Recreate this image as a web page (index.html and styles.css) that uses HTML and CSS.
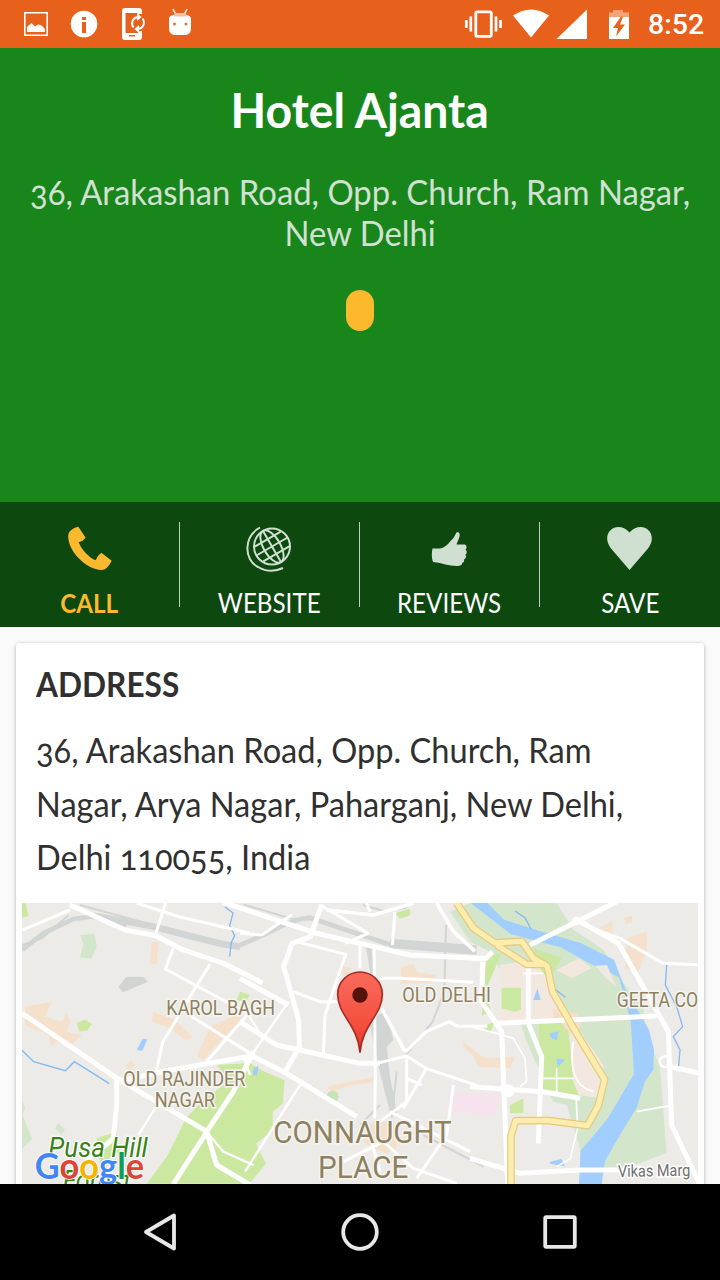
FILE: index.html
```html
<!DOCTYPE html>
<html lang="en">
<head>
<meta charset="utf-8">
<title>Hotel Ajanta</title>
<link rel="stylesheet" href="styles.css">
</head>
<body>
<div class="screen">
  <header class="status">
    <svg class="status-icons" width="200" height="48" viewBox="0 0 200 48">
      <g fill="#fff">
        <path fill-rule="evenodd" d="M24 12h24v24H24zM25.6 13.6v20.8h20.8V13.6z"/>
        <path d="M27 32v-5l4.500-4 3.500 3.500 3-2 3 .5 4 4v3z"/>
        <circle cx="84" cy="24" r="13.300"/>
        <path d="M125 8h14q3 0 3 3v3h-4v-1h-12.500v20H138v-2l4-1v7q0 3-3 3h-14q-3 0-3-3V11q0-3 3-3z"/>
        <path d="M169 18q1-3 6-3h10q6 0 6 4v9q0 7-6 7h-10q-6 0-6-7z"/>
      </g>
      <path d="M82 17h4v3h-4zM82 22h4v11h-4zM129 35h6v1.500h-6z" fill="#e8611c"/>
      <path d="M132.500 26a6 6 0 0 1 5.500-9M144 20a6.500 6.500 0 0 1-5 9" fill="none" stroke="#e8611c" stroke-width="5"/>
      <path d="M133.500 27.500a6.500 6.500 0 0 1 4.500-10.500M142.500 18.500a6.500 6.500 0 0 1-4.500 10.500" fill="none" stroke="#fff" stroke-width="2"/>
      <path d="M137 13l4.500 4-4.500 4zM139 25v8l-4.500-4z" fill="#fff"/>
      <path d="M173 9l2.500 5M187 9l-2.500 5" stroke="#fff" stroke-width="1.500"/>
      <path d="M175 13h11l1 3.500h-13z" fill="#f7bd9e"/>
      <circle cx="174.500" cy="24" r="1.500" fill="#c77d52"/><circle cx="186" cy="24" r="1.500" fill="#c77d52"/>
    </svg>
    <div class="status-right">
      <svg width="170" height="48" viewBox="460 0 170 48">
        <rect x="475.800" y="11.800" width="15.500" height="24.500" rx="1.500" fill="none" stroke="#fff" stroke-width="2.800"/>
        <path d="M466.300 20v8M470.800 16.500v15M496 16.500v15M500.500 20v8" stroke="#fff" stroke-width="2.700"/>
        <path d="M513 15.500Q531 3.500 549 15.500L531 37.500zM587 9.500V39h-30.500z" fill="#fff"/>
        <path d="M609 16h20v23h-20z" fill="#fff"/><path d="M609 12.500h4V10h10v2.500h6V17h-20z" fill="#f3a37b"/>
        <path d="M621 16.500l-8 11.500h5l-2 8.500 9-12h-5l3-8z" fill="#e8611c"/>
      </svg>
      <span class="clock">8:52</span>
    </div>
  </header>

  <section class="hero">
    <h1 class="title"><span class="fit fit-title">Hotel Ajanta</span></h1>
    <p class="subtitle"><span class="fit fit-sub">36, Arakashan Road, Opp. Church, Ram Nagar,<br>New Delhi</span></p>
    <div class="pill"></div>
  </section>

  <nav class="actions">
    <a class="action active">
      <svg width="50" height="50" viewBox="193 84 150 150"><path d="M233 95Q199 103 203 130C207 175 260 224 302 225Q320 224 333 197L302 173Q290 181 285 196C268 191 241 162 234 142Q248 138 255 128Z" fill="#fdb92e"/></svg>
      <span class="fit fit-action">CALL</span>
    </a>
    <a class="action">
      <svg width="50" height="50" viewBox="245 523 50 50"><g fill="none" stroke="#cfdfd0" stroke-width="2"><circle cx="272" cy="546.500" r="18"/><path d="M260 527.500C243 537 244 560 258 567q12 7 25 1"/><g transform="rotate(-30 272 546.500)"><ellipse cx="272" cy="546.500" rx="8.500" ry="18"/><path d="M272 528.500v36M254 546.500h36M257 538h30M257 555h30"/></g></g></svg>
      <span class="fit fit-action">WEBSITE</span>
    </a>
    <a class="action">
      <svg width="50" height="50" viewBox="425 523 50 50"><path d="M432.500 548.500h7.500c6-1 9-6 13-10 3-4 3-7 5-6.500 4 2 0 8-1.500 12.500h8.500c2 1 2 4 .5 5 2 2 1.500 4 0 5 1 2 .5 4-1.500 5 .5 3-1 3-2 3.500.5 2-2 3-5 3-9 0-14-3-24-4-1.500-4-1.500-9-.5-13.500z" fill="#cfdfd0"/></svg>
      <span class="fit fit-action">REVIEWS</span>
    </a>
    <a class="action">
      <svg width="50" height="50" viewBox="605 523 50 50"><path d="M629.500 570L611 548.500C599 532 618 519 629.500 532.500 641 519 660 532 648 548.500z" fill="#cfdfd0"/></svg>
      <span class="fit fit-action">SAVE</span>
    </a>
  </nav>

  <main class="content">
    <article class="card">
      <h2 class="card-title"><span class="fit fit-head">ADDRESS</span></h2>
      <p class="address"><span class="fit fit-address">36, Arakashan Road, Opp. Church, Ram<br>Nagar, Arya Nagar, Paharganj, New Delhi,<br>Delhi 110055, India</span></p>
      <svg class="map" width="676" height="281" viewBox="36 24 2028 843">
        <defs><linearGradient id="pin" x1="0" y1="0" x2="0" y2="1"><stop offset="0" stop-color="#fa6b5c"/><stop offset=".7" stop-color="#f34d3b"/><stop offset="1" stop-color="#d92f23"/></linearGradient></defs>
        <rect x="36" y="24" width="2028" height="843" fill="#edebe7"/>
        <!-- parks and built-up areas -->
        <g fill="#cbe8a0">
          <path d="M36 24h10l10 38-20 6zM200 384l24-10 22 12-14 20-24 4z"/>
          <path d="M620 510l100-6 34 22 70 30-6 70-30 24v56l-50 40 30 60-50 60H410l60-80 20-40 40-80 50-50 80-60z"/>
          <path d="M260 730l60-20 10 60-60 40zM690 290l30 10-14 20-26-4z"/>
          <path d="M1155 55l45-14v20l-30 10z"/>
        </g>
        <g fill="#d3e6cc">
          <path d="M210 120l44-3 6 40-16 34-34-4 10-40zM36 620l10 20-8 20 28 72-30 30zM135 700l10-15 20 20-10 14z"/>
          <path d="M1380 24h260l50 80 90 60 60 100 60 70 10 90 40 90 20 260-160 60-100-10V760l-40-130-40-10-80-180-30-90-40-110-40-70-60-30-60-90z"/>
        </g>
        <g fill="#f5e0cb">
          <path d="M425 140l22 2-8 65-20-2zM45 335l80-15-20 45 50 15 15-25 12 25-12 30 45 10-30 30-45-10-15 15-10-35-70-30zM430 352l60 20 60 55-20 8-60-40-45-15zM600 395l90-40 10 30-40 20-80 90-20-10zM345 515l20-20 8 15-15 18z"/>
          <path d="M1175 215l35-8 12 25 60 8-20 25h-90zM950 575l140-30-5 18-65 8-55 20zM1360 440l70 55-8 14-62-52zM1065 700l30-20h50l22 35-10 50-30 10-65-30zM985 210l40 10-20 25zM1380 460l45 30 90-5-15 35-95-5z"/>
          <path d="M1765 100l42-20v50zM1850 130l60-20v60l-25 60-40-8zM1842 68l25-6v20l-20 5z"/>
        </g>
        <path d="M1470 210l140-20 40 180-180 10zM1585 380h105l90 130-10 100-60-10-120-40zM1640 225l65-35 40 30-60 30z" fill="#f2e8e0"/>
        <path d="M1630 340l70 15 15 30-20 35-65-20z" fill="#f5dfc6"/>
        <path d="M1475 278h58v66l-20 6-38-10zM1430 185l45-10-35 80-15 35 20 65-30 5zM1570 160l85 30-40 65-25-35zM1585 380l60-5 30 35 10 80 5 70 20 50-120-15zM1500 630l40-20v44h-40zM1418 395l35-15-12 34z" fill="#cbe8a0"/>
        <path d="M1320 590l150 10-20 64-140-15z" fill="#f7e3ee"/>
        <circle cx="968" cy="605" r="18" fill="#c5e3b4"/>
        <path d="M325 275l25-30 50 1 14 14-75 32z" fill="#d1d4d1"/>
        <!-- railway lines -->
        <g fill="none" stroke="#d1d5d3">
          <path d="M36 165L100 115 190 72 270 62 350 90" stroke-width="14"/>
          <path d="M250 62L420 92 560 128 640 148 690 155" stroke-width="20"/>
          <path d="M680 155Q740 130 800 100T900 68L1060 122 1160 155" stroke-width="14"/>
          <path d="M210 30l200 55M700 28l150 45h60M1060 30l60 18 70-10M1308 90l-5 200-35 90-80 100M1240 720l180 95M1160 530l-15 140M1110 630l-60 60M36 150l60-20 80-70" stroke-width="6"/>
          <path d="M1075 150q10 60 15 90" stroke-width="16"/>
          <path d="M1075 370l55-20 20 85-20 20 10 90 22 115h-20l-38-150-18-90z" fill="#d1d5d3" stroke="none"/>
          <path d="M1140 145L1400 165" stroke-width="28"/>
        </g>
        <!-- river and canals -->
        <g fill="#a2ceff">
          <path d="M1382 24h50l50 50 95 30 135 40 100 50 35 90 70 120 15 60-2 60-25 35-25 80-50 80-45 80-10 68h-68l5-100 80-95 80-135-10-160-35-130-95-45-80-45-60-15-90-25z"/>
          <path d="M380 465l18-34 14 2-15 34zM730 520l15-8-4 30-12-2zM1570 315l12-35 10 35zM1620 415l26-6-6 28-20-10zM1640 490l25 5-22 22zM1620 800l35-8 10 22-45-8z"/>
        </g>
        <path d="M1756 212l35-2 27 65-30-25z" fill="#eee9e2"/>
        <g fill="none" stroke="#86b8f1" stroke-width="4">
          <path d="M36 466l35 34 95 27 27-27 105 66M645 36l24 18-10 38 15 30-10 20-5 42M1515 48l30 20 18 34M1970 210l-4 60 34 65 18 60-28 30 20 40-5 60M1638 285l28 22"/>
        </g>
        <!-- streets -->
        <g fill="none" stroke="#fff" stroke-width="9" stroke-linejoin="round">
          <path d="M36 105L180 45M467 24l-30 92M380 24l130 42 210 48M490 160l-24 62 260 140M600 208l-52 84-90 150-22 100M545 365l200 125M720 350L590 500M690 115l65 5 90-60"/>
          <path d="M435 640l-50 80M590 710l50 60 90 40M870 570L705 830M690 320l60 95M720 540l-20-58M725 480l110-160" stroke-width="7"/>
          <path d="M860 140l147 38-62 182M850 290l80 30h70M1050 150v70M1092 150l4 400-2 120M1110 250h60l220 12M1155 50l-8 100M1188 470l60-60 70-30 24 14h90M1100 505l90-22 60 38 150 50M945 360l-5 120"/>
          <path d="M930 30l145 85-70 30M1190 490v130l-80 60M1250 520l-70 120M1380 770l-240-120M1330 570l-20 150-90 130M1190 550l45 20M1000 800l120-60 90 80 130 45M1070 690l40 140M1080 50l-10-26"/>
          <path d="M1380 395l80 20 50 15 35 60 5 70-20 15M1540 235h60M1698 600l5 100-22 90-40 25M1880 650l100-18M1690 440q-20 130 60 150M1640 520v80M1600 550h90" stroke-width="5"/>
        </g>
        <g fill="none" stroke="#fff" stroke-width="15" stroke-linejoin="round">
          <path d="M180 30l165 75 93 17 80 42 120 40 120 60M36 355l285 195 270 160L490 867M320 550v80l-10 100-80 70M320 560l150-33 250-43M590 710l80-120 60-120"/>
          <path d="M590 710l30 100 100 60M640 22l280 93 280 65 200 10M935 30l-34 95-55 20-25 70 45 160 2 80-45 80M690 250l145 80M690 380l110 70 250 55h60M720 480l110 55 210 130"/>
          <path d="M950 45l140 15 120-35M1280 24l50 85 65 60M1115 340l70 130" stroke-width="11"/>
          <path d="M1388 190l40 0 20-20M1418 200l-3 120 60 90 18 460M1555 220v165l40 100-10 260M1460 385l480-22M1560 150l140-70 120-60M1695 70l130 75 100 175 50 90 10 280 90 190M1380 575l220 15 110 20M1380 790l150 45 180-10h170M1980 515l90 20"/>
          <path d="M1710 85l120 45 130 75 120 5" stroke-width="9"/>
          <circle cx="1699" cy="78" r="9" stroke-width="7"/><circle cx="1965" cy="500" r="16" stroke-width="7"/><circle cx="1495" cy="587" r="12"/>
        </g>
        <g fill="none" stroke-linejoin="round">
          <path d="M1340 24l50 75 65 45 80-5 35 50 42 25 15 75 75 130 82 135-20 80-32 58-115-15h-100l-14 45v150M1460 150l90 58h58" stroke="#e6c97b" stroke-width="23"/>
          <path d="M1340 24l50 75 65 45 80-5 35 50 42 25 15 75 75 130 82 135-20 80-32 58-115-15h-100l-14 45v150M1460 150l90 58h58" stroke="#fcecae" stroke-width="16"/>
        </g>
        <g class="map-label">
          <text x="469" y="359" textLength="326" lengthAdjust="spacingAndGlyphs" font-size="60">KAROL BAGH</text>
          <text x="1177" y="322" textLength="266" lengthAdjust="spacingAndGlyphs" font-size="60">OLD DELHI</text>
          <text x="1820" y="337" textLength="244" lengthAdjust="spacingAndGlyphs" font-size="60">GEETA CO</text>
          <text x="340" y="574" textLength="366" lengthAdjust="spacingAndGlyphs" font-size="60">OLD RAJINDER</text>
          <text x="434" y="636" textLength="181" lengthAdjust="spacingAndGlyphs" font-size="60">NAGAR</text>
          <text x="790" y="743" textLength="535" lengthAdjust="spacingAndGlyphs" font-size="94">CONNAUGHT</text>
          <text x="924" y="849" textLength="271" lengthAdjust="spacingAndGlyphs" font-size="94">PLACE</text>
        </g>
        <text class="map-road" x="1824" y="846" textLength="217" lengthAdjust="spacingAndGlyphs" transform="rotate(-1 1824 846)">Vikas Marg</text>
        <g class="map-hill"><text x="115" y="786" textLength="298" lengthAdjust="spacingAndGlyphs">Pusa Hill</text><text x="158" y="886" textLength="205" lengthAdjust="spacingAndGlyphs">Forest</text></g>
        <text class="google" x="74" y="853" textLength="328" lengthAdjust="spacingAndGlyphs"><tspan fill="#4285f4">G</tspan><tspan fill="#db4437">o</tspan><tspan fill="#f4b400">o</tspan><tspan fill="#4285f4">g</tspan><tspan fill="#0f9d58">l</tspan><tspan fill="#db4437">e</tspan></text>
        <path d="M1050 473C1044 390 983 360 983 298A67 67 0 0 1 1117 298C1117 360 1056 390 1050 473Z" fill="url(#pin)" stroke="#a82c25" stroke-width="5"/>
        <circle cx="1050" cy="300" r="23" fill="#55130c"/>
      </svg>
    </article>
  </main>

  <footer class="navbar">
    <svg width="720" height="96" viewBox="0 1184 720 96" fill="none" stroke="#e8e8e8" stroke-width="3.800" stroke-linejoin="round">
      <path d="M146 1232l28-16.500v33z"/><circle cx="360" cy="1232" r="16.800"/><rect x="545.200" y="1217.200" width="29.600" height="29.600" rx="1"/>
    </svg>
  </footer>
</div>
</body>
</html>
```
FILE: styles.css
```css
* { box-sizing: border-box; }
body { margin: 0; background: #fafafa; font-family: Lato, "Open Sans", sans-serif; font-variant-numeric: oldstyle-nums; }
.screen { width: 720px; height: 1280px; display: flex; flex-direction: column; overflow: hidden; }
svg { display: block; flex: none; }
h1, h2, p { margin: 0; }

.status { height: 48px; flex: none; background: #e8611c; display: flex; justify-content: space-between; }
.status-right { display: flex; width: 260px; align-items: center; gap: 18px; }
.clock { font: 500 28.500px/48px Roboto, sans-serif; color: #fff; white-space: nowrap; padding-top: 2px; }

.hero { height: 454px; flex: none; background: #19861c; display: flex; flex-direction: column; align-items: center; text-align: center; }
.fit { display: inline-block; white-space: nowrap; }
.fit-title { transform: scaleX(.966); }
.fit-sub { transform: scaleX(.965); }
.fit-action { transform: scaleX(.93); }
.fit-head { transform: scaleX(.93); transform-origin: left; }
.fit-address { transform: scaleX(.958); transform-origin: left; }
.title { margin-top: 32px; font-size: 48px; line-height: 60px; font-weight: 700; color: #fff; }
.subtitle { margin-top: 31px; font-size: 34px; line-height: 41px; color: #d1e1d2; }
.pill { width: 28px; height: 41px; margin-top: 37px; border-radius: 14px; background: #fdb92e; }

.actions { height: 125px; flex: none; display: grid; grid-template-columns: repeat(4, 1fr); padding: 20px 0; background: #0d480f; }
.action { height: 85px; display: flex; flex-direction: column; align-items: center; gap: 14px; padding-top: 1px; border-right: 1px solid #b9ceba; font-size: 26px; line-height: 32px; color: #fff; }
.action:last-child { border-right: 0; }
.active { color: #fdb92e; font-weight: 700; }

.content { flex: 1; min-height: 0; padding: 16px 16px 0; overflow: hidden; }
.card { height: 560px; background: #fff; border-radius: 4px; box-shadow: 0 1px 4px rgba(0, 0, 0, .3); }
.card-title { padding: 20px 20px 0; font-size: 34px; line-height: 42px; font-weight: 700; color: #303030; }
.address { padding: 18px 20px 0; font-size: 34px; line-height: 53.500px; color: #303030; }
.map { margin: 19px 6px 0; }
.map-label { font-family: Roboto, sans-serif; fill: #8d8160; stroke: #f6f4f0; stroke-width: 9px; paint-order: stroke; }
.map-road { font: 50px Roboto, sans-serif; fill: #707070; stroke: #fff; stroke-width: 9px; paint-order: stroke; }
.map-hill { font: italic 400 82px Roboto, sans-serif; fill: #388315; stroke: #fff; stroke-width: 8px; paint-order: stroke; }
.google { font: 700 106px Lato, sans-serif; stroke: #fff; stroke-width: 5px; paint-order: stroke; }

.navbar { height: 96px; flex: none; background: #000; }
```
